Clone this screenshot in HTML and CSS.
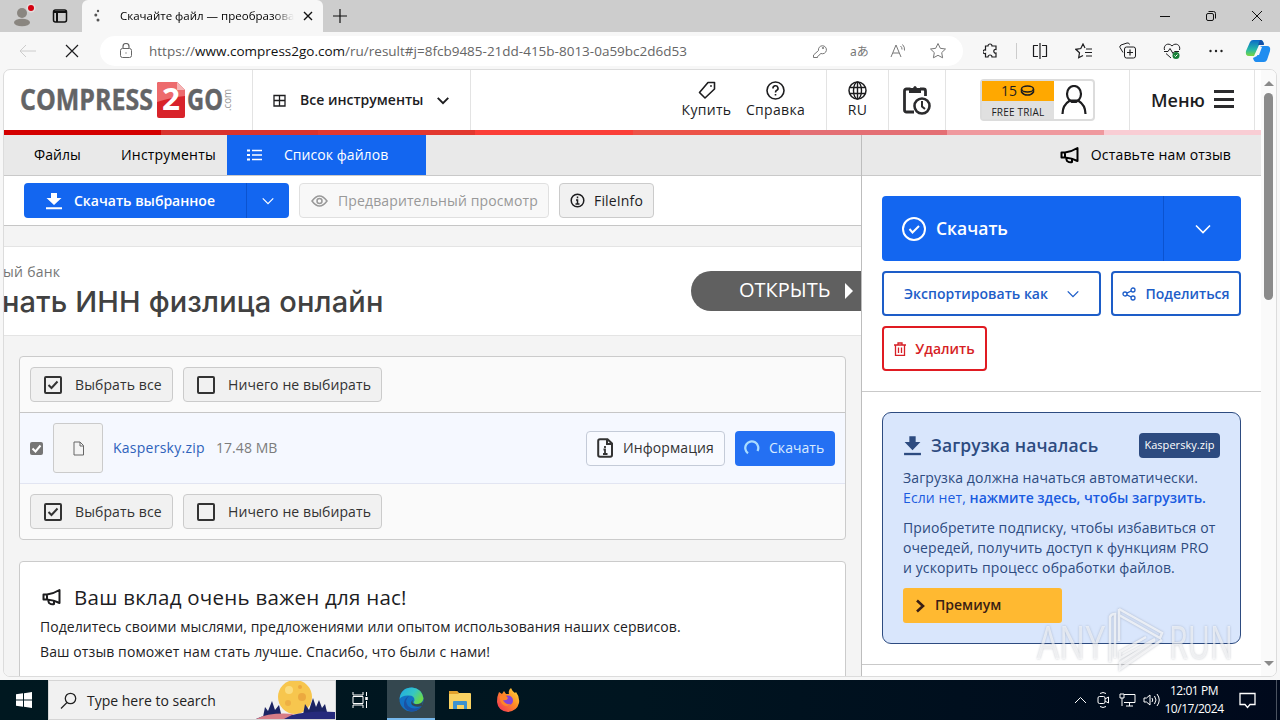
FILE: index.html
```html
<!DOCTYPE html>
<html lang="ru">
<head>
  <meta charset="UTF-8">
  <meta name="viewport" content="width=device-width, initial-scale=1.0">
  <title>Compress2Go</title>
  <link rel="stylesheet" href="styles.css">
</head>
<body>

  <!-- shared icons -->
  <svg class="defs">
    <symbol id="chevron" viewBox="0 0 16 10"><path d="M1 1.500l7 7 7-7"/></symbol>
    <symbol id="download" viewBox="0 0 18 18"><path d="M6 1h6v5h4.500L9 13 1.500 6H6z" fill="currentColor" stroke="none"/><path d="M1 16.300h16" stroke-width="2"/></symbol>
    <symbol id="horn" viewBox="0 0 20 18"><path d="M1.500 6.500H5Q12 5.500 17.500 2v13Q12 12 5 11.500H1.500zM5 6.500v5M6 12l1 3q3 2 5 1v-2.500" stroke-linejoin="round"/></symbol>
    <symbol id="check-on" viewBox="0 0 20 20"><rect x="2" y="2" width="16" height="16" rx="1"/><path d="M5.500 10l3 3 6-6.500"/></symbol>
    <symbol id="check-off" viewBox="0 0 20 20"><rect x="2" y="2" width="16" height="16" rx="1"/></symbol>
  </svg>

  <div class="tab-strip">
    <svg class="profile" width="26" height="26" viewBox="0 0 26 26"><circle cx="12" cy="10" r="5" fill="#8a8680"/><ellipse cx="12" cy="19.500" rx="8" ry="3.800" fill="#8a8680"/><circle cx="21" cy="5" r="4.500" fill="#e4dcdc"/><circle cx="21" cy="5" r="3" fill="#d40010"/></svg>
    <svg class="tabs-icon" width="16" height="16" viewBox="0 0 16 16"><rect x="1.500" y="2" width="13" height="12" rx="2" stroke-width="1.500"/><path d="M2 4h12M5 4v10" stroke-width="2"/></svg>
    <div class="tab">
      <svg width="6" height="14" viewBox="0 0 6 14"><g fill="#555" stroke="none"><circle cx="4" cy="2" r="1.200"/><circle cx="1.800" cy="6" r="1.500"/><circle cx="4" cy="11" r="1.500"/></g></svg>
      <span class="tab-title">Скачайте файл — преобразова</span>
      <svg width="10" height="10" viewBox="0 0 10 10"><path d="M1 1l8 8M9 1l-8 8" stroke-width="1.400"/></svg>
    </div>
    <svg class="new-tab" width="14" height="14" viewBox="0 0 14 14"><path d="M7 0v14M0 7h14" stroke-width="1.200"/></svg>
    <div class="window-buttons">
      <svg width="12" height="12" viewBox="0 0 12 12"><path d="M1 6.500h10"/></svg>
      <svg width="12" height="12" viewBox="0 0 12 12"><rect x="1.500" y="3.500" width="7" height="7" rx="1.500"/><path d="M3.500 1.500h5a2 2 0 0 1 2 2v5"/></svg>
      <svg width="12" height="12" viewBox="0 0 12 12"><path d="M1 1l10 10M11 1L1 11"/></svg>
    </div>
  </div>

  <div class="address-row">
    <svg class="back" width="18" height="14" viewBox="0 0 18 14"><path d="M7 1L1 7l6 6M1 7h16"/></svg>
    <svg class="stop" width="14" height="14" viewBox="0 0 14 14"><path d="M1 1l12 12M13 1L1 13" stroke-width="1.200"/></svg>
    <div class="address">
      <svg class="lock" width="14" height="16" viewBox="0 0 14 16"><rect x="1.500" y="5.500" width="11" height="9" rx="2"/><path d="M4 5V3.500a3 3 0 0 1 6 0V5M7 9.500v1" stroke-width="1.200"/></svg>
      <span class="url">https://<b>www.compress2go.com</b>/ru/result#j=8fcb9485-21dd-415b-8013-0a59bc2d6d53</span>
      <div class="address-icons">
        <svg width="16" height="16" viewBox="0 0 16 16"><path d="M6.500 7.500a4 4 0 1 1 2.500 3l-1.500 1-1 1.500-1 .5v1H1.500V12z" /><circle cx="11" cy="5" r=".7"/></svg>
        <span class="translate">aあ</span>
        <svg width="17" height="16" viewBox="0 0 17 16"><path d="M1 14L6 2l5 12M3 10h6M10.500 3a4 4 0 0 1 1.500 3.500M12.500 1.500a7 7 0 0 1 2 6"/></svg>
        <svg width="18" height="18" viewBox="0 0 18 18"><path d="M9 1.500l2.300 4.800 5.200.7-3.800 3.600.9 5.200L9 13.300l-4.600 2.500.9-5.200L1.500 7l5.200-.7z"/></svg>
      </div>
    </div>
    <div class="browser-tools">
      <svg width="16" height="16" viewBox="0 0 16 16"><path d="M5 3a2 2 0 0 1 4 0h4v3.500a1.800 1.800 0 1 0 0 3.500v4H9a2 2 0 0 0-4 0H2.500v-3.500a1.900 1.900 0 1 1 0-3.500V3z" stroke-width="1.200"/></svg>
      <i class="split"></i>
      <svg width="16" height="16" viewBox="0 0 16 16"><path d="M6 2.500H1.500v11H6M10 2.500h4.500v11H10M8 0v16" stroke-width="1.200" stroke-linejoin="round"/></svg>
      <svg width="17" height="16" viewBox="0 0 17 16"><path d="M10 5L8 1 5.800 5.500l-5 .8 3.700 3.400-.8 5L8 12.500M11 6h6M10 9.500h7M11 13h6" stroke-width="1.200"/></svg>
      <svg width="17" height="17" viewBox="0 0 17 17"><path d="M4 10.500l-3-5A2 2 0 0 1 2 3l6-2a2 2 0 0 1 2.500 1.500"/><rect x="5.500" y="5" width="11" height="11" rx="2"/><path d="M11 7.500v6M8 10.500h6" stroke-width="1.200"/></svg>
      <svg width="18" height="16" viewBox="0 0 18 16"><path d="M1.500 7C0 2 5.500-1 9 3c3.500-4 9-1 7.500 4M1 8.500h4l2-3 3 5 1.500-2H16M3 10.500l5 4.500"/><circle cx="13" cy="12.500" r="3.500" fill="#188038" stroke="none"/><path d="M11.500 12.500l1 1 2-2" stroke="#fff"/></svg>
      <svg width="16" height="16" viewBox="0 0 16 16"><g fill="#222" stroke="none"><circle cx="2.500" cy="8" r="1.200"/><circle cx="8" cy="8" r="1.200"/><circle cx="13.500" cy="8" r="1.200"/></g></svg>
      <svg width="26" height="24" viewBox="0 0 26 24"><defs><linearGradient id="cp" x1="0" y1="0" x2="0" y2="1"><stop offset="0" stop-color="#0a6bc9"/><stop offset=".6" stop-color="#25b9a8"/><stop offset="1" stop-color="#7bd63f"/></linearGradient></defs><path d="M8 1h8q2 0 3 4l-5 1-5 11H4q-4 0-3-5L5 3q1-2 3-2z" fill="url(#cp)" stroke="none"/><path d="M18 7h4q4 0 3 5l-3 9q-1 2-3 2h-8q-2 0-3-4l4-2 3-9q1-1 3-1z" fill="#1f8df0" stroke="none"/><path d="M15 1q3 0 4 5h-6z" fill="#1551a8" stroke="none"/><path d="M14 8h3l-3 8h-3z" fill="#f7f7f7" stroke="none"/></svg>
    </div>
  </div>

  <div class="viewport">
    <div class="page">
      <div class="header">
        <div class="cell logo">
          <svg width="214" height="42" viewBox="0 0 214 42">
            <text class="logo-text" x="0" y="30.500" textLength="133" lengthAdjust="spacingAndGlyphs">COMPRESS</text>
            <path d="M139 3h18l8 8v26q0 2-2 2h-24q-2 0-2-2V5q0-2 2-2z" fill="#d8232a" stroke="none"/>
            <path d="M139 3h18v8h8v6q-12 1-28 6V5q0-2 2-2z" fill="#ed6b6d" stroke="none"/>
            <path d="M157 3l8 8h-8z" fill="#f6b5b5" stroke="none"/>
            <text class="logo-two" x="142" y="31" textLength="18" lengthAdjust="spacingAndGlyphs">2</text>
            <text class="logo-text" x="167" y="30.500" textLength="36" lengthAdjust="spacingAndGlyphs">GO</text>
            <text class="logo-com" transform="translate(210.500 32) rotate(-90)" textLength="22" lengthAdjust="spacingAndGlyphs">.com</text>
          </svg>
        </div>
        <div class="cell all-tools">
          <svg width="13" height="13" viewBox="0 0 13 13"><path d="M1 1.500h11v10.500H1zM6.500 1.500V12M1 6.500h11" stroke-width="1.300"/></svg>
          <span>Все инструменты</span>
          <svg class="bold-stroke" width="12" height="9"><use href="#chevron"/></svg>
        </div>
        <div class="cell links">
          <div class="link buy"><svg width="18" height="19" viewBox="0 0 18 19"><path d="M10 1.500h6.500V8L7 17 1.500 11.500z" stroke-width="1.600" stroke-linejoin="round"/><circle cx="13" cy="5" r=".6"/></svg><span>Купить</span></div>
          <div class="link help"><svg width="19" height="19" viewBox="0 0 19 19"><circle cx="9.500" cy="9.500" r="8.500" stroke-width="1.600"/><path d="M7 7.500a2.500 2.500 0 1 1 3.500 2q-1 .6-1 2M9.500 13v1.500" stroke-width="1.600"/></svg><span>Справка</span></div>
        </div>
        <div class="cell lang">
          <div class="link"><svg width="19" height="19" viewBox="0 0 19 19"><circle cx="9.500" cy="9.500" r="8.500" stroke-width="1.500"/><ellipse cx="9.500" cy="9.500" rx="4" ry="8.500" stroke-width="1.400"/><path d="M9.500 1v17M2 6.500h15M2 12.500h15" stroke-width="1.400"/></svg><span>RU</span></div>
        </div>
        <div class="cell history">
          <svg width="28" height="30" viewBox="0 0 28 30"><path d="M11 27H3.500q-2 0-2-2V6q0-2 2-2h4M17 4h3.500q2 0 2 2v5" stroke-width="2.800"/><path d="M6 3h4q2-4 4 0h4v5H6z" fill="#2b2b2d" stroke="none"/><circle cx="19" cy="21" r="7.500" stroke-width="2.600"/><path d="M19 16v5.500l3 2.500" stroke-width="2"/></svg>
        </div>
        <div class="cell account">
          <div class="credits">
            <div class="plan">
              <div class="coins">15 <svg width="15" height="11" viewBox="0 0 15 11"><ellipse cx="7.500" cy="4" rx="6" ry="3" stroke-width="1.500"/><path d="M1.500 4v3q2 3 6 3t6-3V4" stroke-width="1.500"/></svg></div>
              <div class="trial">FREE TRIAL</div>
            </div>
            <svg width="26" height="30" viewBox="0 0 26 30"><ellipse cx="13" cy="9" rx="7" ry="8" stroke-width="2.200"/><path d="M1.500 29q0-9 7.500-13.500h8q7.500 4.500 7.500 13.500" stroke-width="2.200"/></svg>
          </div>
        </div>
        <div class="cell menu"><span>Меню</span><i class="burger"></i></div>
      </div>

      <div class="stripe"><i></i><i></i><i></i><i></i><i></i><i></i><i></i><i></i></div>

      <div class="columns">
        <div class="main">
          <div class="subnav">
            <span class="nav-files">Файлы</span>
            <span class="nav-tools">Инструменты</span>
            <div class="nav-active">
              <svg width="15" height="12" viewBox="0 0 15 12"><path d="M0 1.500h3M0 6h3M0 10.500h3" stroke-width="2"/><path d="M5 1.500h10M5 6h10M5 10.500h10" stroke-width="1.300"/></svg>
              <span>Список файлов</span>
            </div>
          </div>
          <div class="toolbar">
            <div class="split-button">
              <div class="part"><svg width="18" height="18"><use href="#download"/></svg><span>Скачать выбранное</span></div>
              <div class="arrow"><svg width="12" height="8"><use href="#chevron"/></svg></div>
            </div>
            <div class="button preview"><svg width="17" height="12" viewBox="0 0 17 12"><path d="M1 6q7.500-10 15 0-7.500 10-15 0z" stroke-width="1.500"/><circle cx="8.500" cy="6" r="2.500" stroke-width="1.500"/></svg><span>Предварительный просмотр</span></div>
            <div class="button fileinfo"><svg width="15" height="15" viewBox="0 0 15 15"><circle cx="7.500" cy="7.500" r="6.300" stroke-width="1.500"/><path d="M7.500 3.500v1.800M6 7h1.500v4M5.500 11h4" stroke-width="1.500"/></svg><span>FileInfo</span></div>
          </div>
          <div class="banner">
            <div class="banner-text">
              <div class="banner-bank">ный банк</div>
              <div class="banner-title">нать ИНН физлица онлайн</div>
            </div>
            <div class="banner-open"><span>ОТКРЫТЬ</span><i></i></div>
          </div>

          <div class="files">
            <div class="select-row">
              <div class="button select-all"><svg width="20" height="20"><use href="#check-on"/></svg><span>Выбрать все</span></div>
              <div class="button select-none"><svg width="20" height="20"><use href="#check-off"/></svg><span>Ничего не выбирать</span></div>
            </div>
            <div class="file-row">
              <svg class="checkbox" width="13" height="13" viewBox="0 0 13 13"><rect width="13" height="13" rx="2" fill="#767676" stroke="none"/><path d="M2.500 6.500l3 3 5-6" stroke="#fff" stroke-width="2"/></svg>
              <div class="thumb"><svg width="11" height="15" viewBox="0 0 11 15"><path d="M1 1h6l3.500 3.500V14H1zM7 1v4h3.500"/></svg></div>
              <span class="file-name">Kaspersky.zip</span>
              <span class="file-size">17.48 MB</span>
              <div class="button info"><svg width="16" height="20" viewBox="0 0 16 20"><path d="M3 1.200h7.500L15 5.500V17q0 1.800-1.800 1.800H3Q1.200 18.800 1.200 17V3Q1.200 1.200 3 1.200zM10 1v5h5" stroke-width="2"/><path d="M8 8v2M6.500 11.500H8V16M6 16h4.500" stroke-width="1.800"/></svg><span>Информация</span></div>
              <div class="button loading"><svg width="16" height="16" viewBox="0 0 16 16"><path d="M4 13.200A6.500 6.500 0 1 1 13.500 11" stroke="#a9dcff" stroke-width="2.300"/></svg><span>Скачать</span></div>
            </div>
            <div class="select-row">
              <div class="button select-all"><svg width="20" height="20"><use href="#check-on"/></svg><span>Выбрать все</span></div>
              <div class="button select-none"><svg width="20" height="20"><use href="#check-off"/></svg><span>Ничего не выбирать</span></div>
            </div>
          </div>

          <div class="feedback">
            <div class="feedback-head"><svg width="20" height="18"><use href="#horn"/></svg><span>Ваш вклад очень важен для нас!</span></div>
            <p>Поделитесь своими мыслями, предложениями или опытом использования наших сервисов.</p>
            <p class="thanks">Ваш отзыв поможет нам стать лучше. Спасибо, что были с нами!</p>
          </div>
        </div>

        <div class="side">
          <div class="side-nav"><svg width="20" height="18"><use href="#horn"/></svg><span>Оставьте нам отзыв</span></div>
          <div class="actions">
            <div class="big-download">
              <div class="part"><svg width="24" height="24" viewBox="0 0 24 24"><circle cx="12" cy="12" r="11" stroke-width="2"/><path d="M7.500 12l3 3.500 6.500-6.500" stroke-width="2"/></svg><span>Скачать</span></div>
              <div class="arrow"><svg width="16" height="10"><use href="#chevron"/></svg></div>
            </div>
            <div class="action-row">
              <div class="outline export"><span>Экспортировать как</span><svg width="12" height="8"><use href="#chevron"/></svg></div>
              <div class="outline share"><svg width="14" height="14" viewBox="0 0 14 14"><circle cx="3" cy="7" r="2"/><circle cx="11" cy="3" r="2"/><circle cx="11" cy="11" r="2"/><path d="M4.800 6.200L9.200 4M4.800 7.800L9.200 10"/></svg><span>Поделиться</span></div>
            </div>
            <div class="outline delete"><svg width="12" height="14" viewBox="0 0 12 14"><path d="M0 3h12M1.500 3v10.500h9V3M4 3V1h4v2M4.500 5.500v5.500M7.500 5.500v5.500"/></svg><span>Удалить</span></div>
          </div>
          <div class="notice-wrap">
            <div class="notice">
              <div class="notice-head"><svg width="19" height="21" viewBox="0 0 18 18" preserveAspectRatio="none"><use href="#download"/></svg><span>Загрузка началась</span><em>Kaspersky.zip</em></div>
              <p>Загрузка должна начаться автоматически.<br><a>Если нет, <b>нажмите здесь, чтобы загрузить.</b></a></p>
              <p>Приобретите подписку, чтобы избавиться от<br>очередей, получить доступ к функциям PRO<br>и ускорить процесс обработки файлов.</p>
              <div class="premium"><svg width="9" height="14" viewBox="0 0 9 14"><path d="M1 1.500L7 7l-6 5.500" stroke-width="2.600"/></svg><span>Премиум</span></div>
            </div>
          </div>
        </div>
      </div>
    </div>
    <div class="scrollbar"><i class="up"></i><i class="thumb-bar"></i><i class="down"></i></div>
  </div>

  <div class="taskbar">
    <div class="start"><svg width="16" height="16" viewBox="0 0 16 16"><path d="M0 2.300L7 1.300v6.200H0zM8 1.200L16 0v7.500H8zM0 8.500h7v6.200L0 13.700zM8 8.500h8V16l-8-1.200z" fill="#fff" stroke="none"/></svg></div>
    <div class="search">
      <svg width="17" height="17" viewBox="0 0 17 17"><circle cx="10.500" cy="6.500" r="5.200" stroke-width="1.300"/><path d="M7 10.500L1 16.500" stroke-width="1.300"/></svg>
      <span>Type here to search</span>
      <svg class="moon" width="80" height="38" viewBox="0 0 80 38">
        <circle cx="40" cy="16" r="17" fill="#f7c64e"/><circle cx="34" cy="9" r="4" fill="#fbdc7e"/><circle cx="47" cy="16" r="4" fill="#eca93f"/><circle cx="33" cy="22" r="3" fill="#eeb044"/><circle cx="45" cy="6" r="2" fill="#eca93f"/>
        <path d="M8 36l2-10 3 4 4-10 3 9 4-5 3 13zM48 34l2-11 4 6 4-12 3 9 3-7 3 8 3-4 3 12z" fill="#1c2463"/>
        <path d="M1 38q14-7 36-4 20-5 43-3v7z" fill="#262a7c"/><path d="M1 38q14-7 38-5l-10 5z" fill="#d67c86"/>
      </svg>
    </div>
    <div class="task"><svg class="task-view" width="17" height="16" viewBox="0 0 17 16"><path d="M1 0v3h10V0M1 16v-3h10v3M1 4.500h10v7H1zM14.500 0v4M14.500 9v7"/><path d="M14.500 5v3" stroke-width="2.500"/></svg></div>
    <div class="task active"><svg width="25" height="25" viewBox="0 0 25 25"><defs><linearGradient id="eg" x1="0" y1="0" x2="1" y2=".5"><stop offset="0" stop-color="#1fa9e4"/><stop offset=".6" stop-color="#35c6c4"/><stop offset="1" stop-color="#6ad84c"/></linearGradient></defs><circle cx="12.500" cy="12.500" r="12" fill="#1271c4"/><path d="M.5 12Q2 .5 13 .5q10 1 11.500 11-1 6-8 5.500-3-1-1-3.500 0-5-5.500-5Q3 8 .5 12z" fill="url(#eg)"/><path d="M10 9q-5 4-1 10 6 5 14 0-4 5.500-11 5.500-8-2-7-9 1-5 5-6.500z" fill="#1b52a3"/><path d="M14 13q-2 3 2 4 5 1 8-3l-1 5q-6 2-10-1-2-3 1-5z" fill="#35474f"/></svg></div>
    <div class="task"><svg width="22" height="20" viewBox="0 0 22 20"><path d="M0 2q0-1 1-1h7l2 2h11q1 0 1 1v15H0z" fill="#f9d262"/><path d="M0 1h8l2 3H0z" fill="#e2a22d"/><path d="M4 19v-7q0-1 1-1h12q1 0 1 1v7h-3v-4H8v4z" fill="#3c92d0"/></svg></div>
    <div class="task"><svg width="24" height="24" viewBox="0 0 24 24"><defs><linearGradient id="ff" x1="1" y1="0" x2="0" y2="1"><stop offset="0" stop-color="#ffe33f"/><stop offset=".45" stop-color="#ff8b25"/><stop offset="1" stop-color="#f0285e"/></linearGradient></defs><path d="M3 4l3 2 2-3 2 3h3q-1-4 2-6 1 3 4 5l1-1q4 5 3 11-2 8-11 9-10-1-11-10Q1 8 3 4z" fill="url(#ff)"/><circle cx="12" cy="12.500" r="5" fill="#8344d8"/><path d="M4 8q6-2 8 2-1 3-5 2 2 5 8 4-5 4-9 0-3-4-2-8z" fill="#ff8428"/></svg></div>
    <div class="tray">
      <svg class="more" width="13" height="8" viewBox="0 0 13 8"><path d="M1 7l5.500-5.500L12 7"/></svg>
      <svg width="13" height="18" viewBox="0 0 13 18"><rect x="1" y="5.500" width="7" height="7" rx="1.500"/><path d="M8 8l3.500-2v6L8 10M3 2.500q3-2 6 0M3 15.500q3 2 6 0"/></svg>
      <svg width="17" height="14" viewBox="0 0 17 14"><path d="M5 1.500h11v8H5M10.500 9.500V13M7 13h7M1 1h4v4H1zM3 5v8"/></svg>
      <svg class="sound" width="18" height="14" viewBox="0 0 18 14"><path d="M1 5v4h2.500L7 12V2L3.500 5zM9 5q1.500 2 0 4M11.500 3q3 4 0 8M14 1q4.500 6 0 12"/></svg>
      <div class="clock"><div>12:01 PM</div><div>10/17/2024</div></div>
      <svg width="17" height="17" viewBox="0 0 17 17"><path d="M1 1.500h15v11h-5L8.500 15.500 6 12.500H1z" stroke-width="1.300"/></svg>
      <i class="peek"></i>
    </div>
  </div>

  <svg class="watermark" width="204" height="74" viewBox="0 0 204 74">
    <text x="4" y="56" textLength="68" lengthAdjust="spacingAndGlyphs">ANY</text>
    <text x="136" y="56" textLength="64" lengthAdjust="spacingAndGlyphs">RUN</text>
    <path d="M77 59V14q1-3 5-3v44M86 6v32M86 6l43 24-2 5-41-23M129 37L87 66v-6l35-23M122 36L87 55v-6l26-15"/>
  </svg>

</body>
</html>
```
FILE: styles.css
```css
* {
  box-sizing: border-box;
}
body {
  margin: 0;
  width: 1280px;
  height: 720px;
  overflow: hidden;
  position: relative;
  display: flex;
  flex-direction: column;
  background: #f7f7f7;
  font-family: "Open Sans", "Noto Sans", sans-serif;
  font-size: 14px;
  color: #1d1d1f;
  white-space: nowrap;
}
svg {
  display: block;
  flex: none;
  fill: none;
  stroke: currentColor;
}
.defs {
  position: absolute;
  width: 0;
  height: 0;
}
p {
  margin: 0;
}

/* browser frame */
.tab-strip {
  flex: none;
  height: 32px;
  background: #cdcdcd;
  display: flex;
  align-items: center;
  color: #111;
}
.profile {
  margin-left: 10px;
  stroke: none;
}
.tabs-icon {
  margin-left: 16px;
}
.tab {
  width: 241px;
  height: 32px;
  margin-left: 14px;
  padding: 0 11px 0 12px;
  background: #f7f7f7;
  border-radius: 6px 6px 0 0;
  display: flex;
  align-items: center;
}
.tab-title {
  width: 174px;
  margin: 0 9px 0 20px;
  padding-bottom: 1px;
  font-size: 11.5px;
  color: #000;
  -webkit-mask-image: linear-gradient(90deg, #000 88%, transparent);
}
.new-tab {
  margin-left: 10px;
}
.window-buttons {
  margin-left: auto;
  margin-right: 17px;
  display: flex;
  gap: 34px;
}
.address-row {
  flex: none;
  height: 37px;
  display: flex;
  align-items: center;
}
.back {
  margin-left: 19px;
  color: #ccc;
}
.stop {
  margin-left: 28px;
}
.address {
  width: 863px;
  height: 30px;
  margin-left: 21px;
  padding: 0 16px 0 19px;
  background: #fff;
  border-radius: 15px;
  display: flex;
  align-items: center;
  color: #666;
}
.url {
  margin-left: 16px;
  font-size: 13.5px;
}
.url b {
  font-weight: normal;
  color: #111;
}
.address-icons {
  margin-left: auto;
  display: flex;
  align-items: center;
  gap: 22px;
  color: #777;
}
.translate {
  font-family: "Noto Sans", "Noto Sans CJK JP", sans-serif;
  font-size: 12px;
  width: 18px;
}
.browser-tools {
  display: flex;
  align-items: center;
  margin-left: 20px;
  gap: 27px;
}
.split {
  width: 1px;
  height: 16px;
  margin: 0 -12px 0 -10px;
  background: #ccc;
}
.browser-tools svg:last-child {
  margin-left: -6px;
}

/* page */
.viewport {
  flex: none;
  width: 1274px;
  height: 608px;
  margin: 0 0 3px 3px;
  border: 1px solid #dcdcdc;
  border-radius: 7px;
  overflow: hidden;
  display: flex;
  background: #fff;
}
.page {
  width: 1257px;
  height: 606px;
  overflow: hidden;
}
.scrollbar {
  width: 15px;
  background: #fafafa;
  display: flex;
  flex-direction: column;
  align-items: center;
}
.up, .down {
  border: 5px solid transparent;
}
.up {
  border-bottom: 5px solid #8a8a8a;
  border-top: 0;
  margin-top: 11px;
}
.thumb-bar {
  width: 9px;
  height: 207px;
  margin-top: 7px;
  border-radius: 5px;
  background: #8b8b8b;
}
.down {
  border-top: 5px solid #8a8a8a;
  border-bottom: 0;
  margin-top: auto;
  margin-bottom: 10px;
}
.header {
  height: 60px;
  padding-right: 6px;
  display: flex;
}
.cell {
  display: flex;
  align-items: center;
  border-right: 1px solid #e3e3e3;
  font-size: 14px;
}
.logo {
  width: 249px;
  padding-left: 16px;
}
.logo-text {
  font: bold 28px "Open Sans", sans-serif;
  fill: #636466;
  stroke: #636466;
  stroke-width: 0.4;
}
.logo-two {
  font: bold 31px "Open Sans", sans-serif;
  fill: #fff;
  stroke: none;
}
.logo-com {
  font: 11px "Open Sans", sans-serif;
  fill: #999;
  stroke: none;
}
.all-tools {
  width: 218px;
  padding-left: 20px;
}
.all-tools span {
  margin-left: 14px;
  width: 123px;
  padding-bottom: 2px;
  font-weight: 600;
}
.all-tools .bold-stroke {
  margin-left: 14px;
  stroke-width: 2.6;
}
.links {
  margin-left: auto;
  width: 156px;
  padding-left: 10px;
  gap: 14px;
}
.link {
  display: flex;
  flex-direction: column;
  align-items: center;
  font-weight: 500;
  line-height: 20px;
  letter-spacing: 0.3px;
}
.buy {
  width: 51px;
}
.help {
  width: 59px;
}
.lang {
  width: 62px;
  justify-content: center;
}
.history {
  width: 57px;
  justify-content: center;
  color: #2b2b2d;
}
.account {
  width: 184px;
  padding-left: 34px;
}
.credits {
  width: 115px;
  height: 42px;
  border: 2px solid #dcdcdc;
  border-radius: 4px;
  display: flex;
  align-items: center;
  justify-content: space-between;
  padding-right: 6px;
}
.plan {
  width: 72px;
  text-align: center;
  background: #e0e0e0;
}
.coins {
  height: 20px;
  padding-bottom: 1px;
  background: #ffa800;
  display: flex;
  align-items: center;
  justify-content: center;
  gap: 3px;
}
.trial {
  height: 18px;
  line-height: 22px;
  font-size: 10px;
  font-weight: 500;
  letter-spacing: 0.2px;
}
.menu {
  width: 125px;
  padding-left: 21px;
  font-size: 18px;
  font-weight: 600;
}
.menu span {
  width: 53px;
}
.burger {
  width: 20px;
  height: 18px;
  margin-left: 10px;
  margin-bottom: 2px;
  background: repeating-linear-gradient(#2b2b2d 0 3px, transparent 3px 7.5px);
}
.stripe {
  height: 5px;
  display: flex;
}
.stripe i {
  flex: 1;
  background: #d40000;
}
.stripe i:nth-child(2) { background: #d9332e; }
.stripe i:nth-child(3) { background: #e2382f; }
.stripe i:nth-child(4) { background: #fb3f38; }
.stripe i:nth-child(5) { background: #ec5348; }
.stripe i:nth-child(6) { background: #e46f74; }
.stripe i:nth-child(7) { background: #ef999e; }
.stripe i:nth-child(8) { background: #f9cdd4; }

.columns {
  display: flex;
  letter-spacing: 0.05px;
}
.main {
  width: 858px;
  height: 541px;
  border-right: 1px solid #bdbdbd;
  background: #f4f4f4;
  overflow: hidden;
}
.subnav {
  height: 41px;
  padding-left: 30px;
  background: #e9e9e9;
  border-bottom: 1px solid #c9c9c9;
  display: flex;
  align-items: center;
  color: #000;
}
.subnav span, .side-nav span {
  padding-bottom: 2px;
}
.nav-files {
  width: 87px;
}
.nav-tools {
  width: 106px;
  letter-spacing: 0.2px;
}
.nav-active {
  width: 199px;
  height: 40px;
  padding-left: 20px;
  background: #1366f0;
  color: #fff;
  display: flex;
  align-items: center;
  gap: 22px;
}
.toolbar {
  height: 50px;
  padding-left: 20px;
  background: #fff;
  border-bottom: 1px solid #c6c6c6;
  display: flex;
  align-items: center;
  gap: 10px;
}
.split-button {
  width: 265px;
  height: 35px;
  border-radius: 4px;
  background: #1366f0;
  color: #fff;
  font-weight: 600;
  letter-spacing: 0;
  display: flex;
}
.part {
  flex: 1;
  display: flex;
  align-items: center;
  padding-left: 21px;
  gap: 11px;
}
.arrow {
  width: 43px;
  border-left: 1px solid #0b53d0;
  display: flex;
  align-items: center;
  justify-content: center;
}
.arrow svg {
  stroke-width: 1.6;
}
.button {
  height: 35px;
  border: 1px solid #cbcbcb;
  border-radius: 4px;
  background: #f1f1f1;
  display: flex;
  align-items: center;
}
.preview {
  width: 250px;
  padding-left: 11px;
  gap: 10px;
  color: #999;
  background: #f8f8f8;
  border-color: #e0e0e0;
  letter-spacing: 0.12px;
}
.fileinfo {
  width: 95px;
  padding-left: 10px;
  gap: 9px;
  letter-spacing: 0.15px;
}
.banner {
  height: 90px;
  margin-top: 20px;
  background: #fff;
  border: solid #e4e4e4;
  border-width: 1px 0;
  display: flex;
  justify-content: space-between;
  align-items: center;
}
.banner-text {
  margin-left: -2px;
  padding-bottom: 2px;
}
.banner-bank {
  margin-left: -8px;
  line-height: 22px;
  color: #757575;
  font-size: 14px;
  letter-spacing: 0.25px;
}
.banner-title {
  line-height: 37px;
  font-family: Inter, "Open Sans", sans-serif;
  font-size: 29px;
  font-weight: 500;
  letter-spacing: 0.15px;
  color: #414141;
}
.banner-open {
  width: 170px;
  height: 40px;
  padding-left: 48px;
  border-radius: 20px 0 0 20px;
  background: #606060;
  color: #fff;
  font-size: 20px;
  font-weight: 500;
  letter-spacing: 0;
  display: flex;
  align-items: center;
}
.banner-open span {
  width: 92px;
  padding-bottom: 3px;
}
.banner-open i {
  margin-left: 14px;
  border: 8px solid transparent;
  border-left-color: #fff;
  border-right: 0;
}
.files {
  width: 827px;
  margin: 20px 0 0 15px;
  border: 1px solid #cbcbcb;
  border-radius: 4px;
  background: #fafafa;
}
.select-row {
  height: 55px;
  padding-left: 10px;
  display: flex;
  align-items: center;
  gap: 10px;
  letter-spacing: 0.1px;
}
.select-all {
  width: 143px;
  padding-left: 12px;
  gap: 12px;
}
.select-none {
  width: 199px;
  padding-left: 12px;
  gap: 12px;
}
.select-row svg {
  stroke-width: 2;
  color: #333;
}
.select-row .button {
  color: #333;
}
.file-row {
  height: 72px;
  padding: 0 10px;
  border-top: 1px solid #c6c6c6;
  border-bottom: 1px solid #e2e5f2;
  background: #f5f8ff;
  display: flex;
  align-items: center;
}
.file-row span {
  padding-bottom: 2px;
}
.thumb {
  width: 50px;
  height: 50px;
  margin: 0 10px;
  border: 1px solid #cbcbcb;
  border-radius: 3px;
  background: #f4f4f4;
  display: flex;
  align-items: center;
  justify-content: center;
  color: #666;
}
.file-name {
  width: 92px;
  color: #2e62bb;
  letter-spacing: 0.25px;
}
.file-size {
  margin-left: 11px;
  color: #7c7c7c;
}
.info {
  width: 139px;
  margin-left: auto;
  padding-left: 10px;
  gap: 10px;
  background: #f8faff;
  border-color: #c4cbd8;
  color: #333;
  letter-spacing: 0.1px;
}
.loading {
  width: 100px;
  margin-left: 10px;
  padding-left: 9px;
  gap: 9px;
  background: #2470f3;
  border: 0;
  color: #d8ebff;
}
.feedback {
  width: 827px;
  height: 200px;
  margin: 21px 0 0 15px;
  padding: 20px;
  border: 1px solid #cbcbcb;
  border-radius: 4px;
  background: #fff;
}
.feedback-head {
  height: 32px;
  padding: 0 0 2px 2px;
  display: flex;
  align-items: center;
  gap: 12px;
  font-size: 20.5px;
  letter-spacing: 0.25px;
}
.feedback-head svg, .side-nav svg {
  stroke-width: 2;
}
.feedback p {
  line-height: 25px;
}
.thanks {
  letter-spacing: 0.1px;
}
.side {
  width: 399px;
  background: #fff;
}
.side-nav {
  height: 41px;
  padding-right: 30px;
  background: #e9e9e9;
  border-bottom: 1px solid #c9c9c9;
  display: flex;
  align-items: center;
  justify-content: flex-end;
  gap: 11px;
  color: #000;
  letter-spacing: 0.15px;
}
.actions {
  height: 216px;
  padding: 20px;
  border-bottom: 1px solid #c9c9c9;
  display: flex;
  flex-direction: column;
  gap: 10px;
  letter-spacing: 0;
}
.big-download {
  width: 359px;
  height: 65px;
  border-radius: 4px;
  background: #1366f0;
  color: #fff;
  font-size: 17.5px;
  font-weight: 600;
  display: flex;
}
.big-download .part {
  padding-left: 20px;
  gap: 10px;
}
.big-download .part span {
  padding-bottom: 2px;
}
.big-download .arrow {
  width: 78px;
}
.action-row {
  display: flex;
  gap: 10px;
}
.outline {
  height: 45px;
  border: 2px solid #1d5dc8;
  border-radius: 4px;
  color: #1d5dc8;
  font-weight: 600;
  display: flex;
  align-items: center;
  justify-content: center;
}
.outline svg {
  stroke-width: 1.3;
}
.outline use {
  stroke-width: 1.8;
}
.export {
  width: 219px;
  gap: 19px;
}
.share {
  width: 130px;
  gap: 9px;
}
.delete {
  width: 105px;
  gap: 9px;
  border-color: #e01b22;
  color: #d61f26;
}
.notice-wrap {
  height: 273px;
  padding: 20px;
  border-bottom: 1px solid #c9c9c9;
}
.notice {
  width: 359px;
  height: 232px;
  padding: 20px;
  border: 1px solid #2d4b80;
  border-radius: 9px;
  background: #d9e6fc;
  color: #2d4b80;
}
.notice-head {
  height: 25px;
  display: flex;
  align-items: center;
  font-size: 17.5px;
  font-weight: 600;
}
.notice-head span {
  margin-left: 9px;
  padding-bottom: 2px;
  letter-spacing: 0.1px;
}
.notice-head em {
  width: 81px;
  height: 25px;
  margin-left: auto;
  border-radius: 4px;
  background: #2d4b80;
  color: #fff;
  font: 11px/24px "Open Sans", sans-serif;
  text-align: center;
}
.notice p {
  margin-top: 10px;
  line-height: 20px;
  letter-spacing: 0.1px;
}
.notice a {
  color: #1a5be0;
}
.notice b {
  font-weight: 600;
  letter-spacing: -0.02px;
}
.premium {
  width: 159px;
  height: 35px;
  margin-top: 10px;
  padding-left: 13px;
  border-radius: 3px;
  background: #ffb931;
  color: #3a1e14;
  font-weight: 600;
  letter-spacing: 0;
  display: flex;
  align-items: center;
  gap: 10px;
}
.premium span {
  padding-bottom: 2px;
}

/* taskbar */
.taskbar {
  flex: none;
  height: 40px;
  background: linear-gradient(90deg, #001820, #001520 50%, #00091c);
  color: #fff;
  display: flex;
}
.start {
  width: 48px;
  display: flex;
  align-items: center;
  justify-content: center;
}
.search {
  width: 288px;
  padding-left: 11px;
  background: #f1f1f1;
  border: 1px solid #d5d5d5;
  color: #222;
  display: flex;
  align-items: center;
  gap: 10px;
}
.moon {
  margin-left: auto;
  stroke: none;
}
.task {
  width: 48px;
  display: flex;
  align-items: center;
  justify-content: center;
}
.task svg {
  stroke: none;
}
.task .task-view {
  stroke: #fff;
}
.active {
  margin-left: 3px;
  margin-right: 1px;
  background: #34474f;
  border-bottom: 2px solid #76b9ed;
}
.tray {
  margin-left: auto;
  display: flex;
  align-items: center;
  gap: 9px;
}
.more {
  margin-right: 1px;
}
.sound {
  margin-left: -2px;
}
.clock {
  width: 60px;
  margin: 0 6px 0 -6px;
  font-size: 12px;
  line-height: 18px;
  letter-spacing: -0.45px;
  text-align: center;
}
.peek {
  width: 1px;
  height: 40px;
  margin: 0 3px 0 11px;
  background: #4a5260;
}
.watermark {
  position: absolute;
  left: 1033px;
  top: 603px;
  stroke: none;
  filter: drop-shadow(0 0 1px rgba(80, 90, 110, 0.5));
}
.watermark text {
  font: 46px "Open Sans", sans-serif;
  fill: rgba(255, 255, 255, 0.6);
}
.watermark path {
  stroke: rgba(255, 255, 255, 0.7);
  stroke-width: 2.5;
}
```
